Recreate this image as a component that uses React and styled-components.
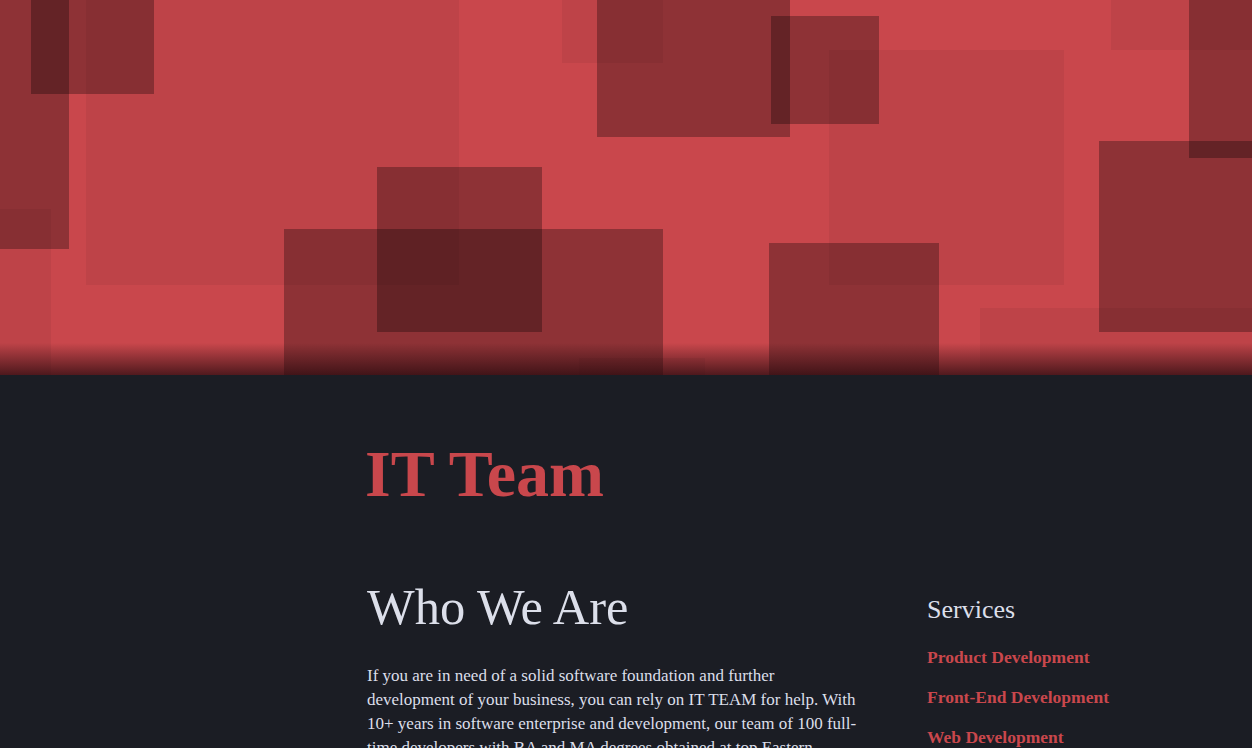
import React from "react";
import styled, { createGlobalStyle } from "styled-components";

const GlobalStyle = createGlobalStyle`
  html, body {
    margin: 0;
    padding: 0;
    background: #1b1d24;
  }
  body {
    font-family: "Liberation Serif", "DejaVu Serif", serif;
    color: #dcdfea;
  }
`;

const Hero = styled.header`
  position: relative;
  height: 375px;
  background: #c9474c;
  overflow: hidden;

  &::after {
    content: "";
    position: absolute;
    left: 0;
    right: 0;
    bottom: 0;
    height: 32px;
    background: linear-gradient(to bottom, rgba(40, 10, 14, 0), rgba(40, 10, 14, 0.75));
  }
`;

const Pattern = styled.svg`
  display: block;
  width: 100%;
  height: 375px;
`;

const Main = styled.main`
  padding: 66px 0 80px;
`;

const Brand = styled.h1`
  margin: 0 0 0 365px;
  font-size: 66px;
  line-height: 1;
  font-weight: 700;
  color: #c9474c;
`;

const Layout = styled.div`
  display: grid;
  grid-template-columns: 367px 500px 1fr;
  margin-top: 75px;
`;

const Article = styled.section`
  grid-column: 2;
`;

const Title = styled.h2`
  margin: 0;
  font-size: 50.5px;
  line-height: 1;
  font-weight: 400;
  color: #dcdfea;
`;

const Text = styled.p`
  margin: 31px 0 0;
  max-width: 490px;
  font-size: 17px;
  line-height: 24px;
  color: #dcdfea;
`;

const Aside = styled.aside`
  grid-column: 3;
  padding: 15px 0 0 60px;
`;

const AsideTitle = styled.h3`
  margin: 0;
  font-size: 26px;
  line-height: 1;
  font-weight: 400;
  color: #dcdfea;
`;

const Links = styled.ul`
  list-style: none;
  margin: 22px 0 0;
  padding: 0;
  display: flex;
  flex-direction: column;
  gap: 16px;
`;

const LinkItem = styled.li`
  font-size: 17.5px;
  line-height: 24px;
  font-weight: 700;
  color: #c9474c;
`;

const dark = [
  [0, -2, 69, 251],
  [31, -2, 123, 96],
  [284, 229, 379, 160],
  [377, 167, 165, 165],
  [597, -2, 193, 139],
  [771, 16, 108, 108],
  [769, 243, 170, 140],
  [1189, -2, 70, 160],
  [1099, 141, 160, 191],
];

const light = [
  [86, -2, 373, 287],
  [0, 209, 51, 180],
  [562, -2, 101, 65],
  [829, 50, 235, 235],
  [579, 358, 126, 30],
  [1111, -2, 150, 52],
  [980, 308, 280, 80],
];

const services = ["Product Development", "Front-End Development", "Web Development", "Mobile Development"];

export default function App() {
  return (
    <>
      <GlobalStyle />
      <Hero>
        <Pattern>
          {light.map(([x, y, w, h], i) => (
            <rect key={"l" + i} x={x} y={y} width={w} height={h} fill="#000" fillOpacity="0.05" />
          ))}
          {dark.map(([x, y, w, h], i) => (
            <rect key={"d" + i} x={x} y={y} width={w} height={h} fill="#000" fillOpacity="0.29" />
          ))}
        </Pattern>
      </Hero>
      <Main>
        <Brand>IT Team</Brand>
        <Layout>
          <Article>
            <Title>Who We Are</Title>
            <Text>
              If you are in need of a solid software foundation and further development of your
              business, you can rely on IT TEAM for help. With 10+ years in software enterprise and
              development, our team of 100 full-time developers with BA and MA degrees obtained at
              top Eastern European universities is ready to turn your ideas into reliable products.
            </Text>
          </Article>
          <Aside>
            <AsideTitle>Services</AsideTitle>
            <Links>
              {services.map((s) => (
                <LinkItem key={s}>{s}</LinkItem>
              ))}
            </Links>
          </Aside>
        </Layout>
      </Main>
    </>
  );
}
